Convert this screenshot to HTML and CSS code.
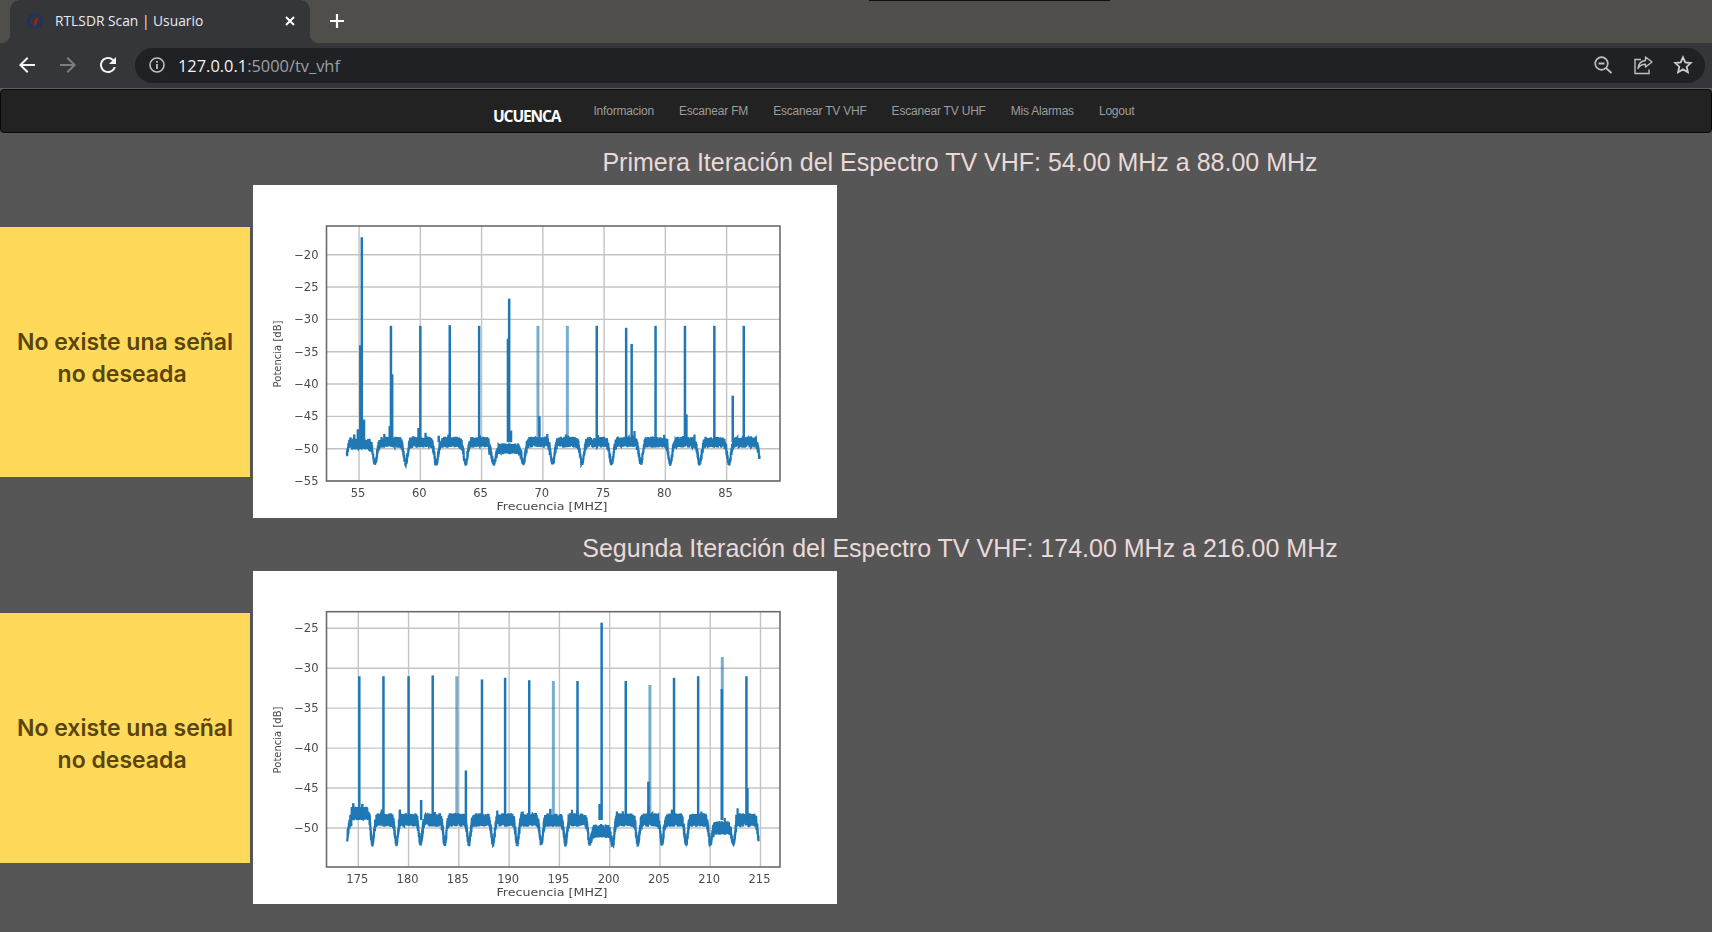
FILE: index.html
```html
<!DOCTYPE html>
<html lang="es">
<head>
<meta charset="utf-8">
<title>RTLSDR Scan | Usuario</title>
<link rel="stylesheet" href="styles.css">
</head>
<body>
<header class="browser">
  <div class="tabstrip">
    <span class="capture-line"></span>
    <div class="tab">
      <svg class="favicon" viewBox="0 0 16 16"><circle cx="8" cy="8" r="6.500" fill="none" stroke="#1d3358" stroke-width="2.500"/><path d="M12 2 7 9l1 6z" fill="#a3202c"/></svg>
      <span class="tab-title">RTLSDR Scan | Usuario</span>
      <svg class="tab-close" viewBox="0 0 12 12"><path d="M2 2l8 8M10 2l-8 8" stroke="#fff" stroke-width="2" fill="none"/></svg>
    </div>
    <svg class="new-tab" viewBox="0 0 16 16"><path d="M8 1v14M1 8h14" stroke="#fff" stroke-width="2.2" fill="none"/></svg>
  </div>
  <div class="toolbar">
    <svg class="tool" viewBox="0 0 24 24"><path fill="#f1f3f4" d="M20 11H7.83l5.59-5.59L12 4l-8 8 8 8 1.41-1.41L7.83 13H20v-2z"/></svg>
    <svg class="tool" viewBox="0 0 24 24"><path fill="#7d7e81" d="M4 11h12.17l-5.59-5.59L12 4l8 8-8 8-1.41-1.41L16.17 13H4v-2z"/></svg>
    <svg class="tool tool-reload" viewBox="0 0 24 24"><path fill="#f1f3f4" d="M17.65 6.35A7.958 7.958 0 0 0 12 4c-4.42 0-7.99 3.58-7.99 8s3.57 8 7.99 8c3.73 0 6.84-2.55 7.73-6h-2.08A5.99 5.99 0 0 1 12 18c-3.31 0-6-2.69-6-6s2.69-6 6-6c1.66 0 3.14.69 4.22 1.78L13 11h7V4l-2.35 2.35z"/></svg>
    <div class="omnibox">
      <svg class="info" viewBox="0 0 16 16"><circle cx="8" cy="8" r="7" fill="none" stroke="#bdc1c6" stroke-width="1.6"/><path d="M8 7v5M8 4v1.8" stroke="#bdc1c6" stroke-width="1.8" fill="none"/></svg>
      <span class="url"><span class="url-host">127.0.0.1</span>:5000/tv_vhf</span>
      <div class="omni-actions">
        <svg class="omni-icon" viewBox="0 0 20 20"><circle cx="8.5" cy="8.5" r="6.3" fill="none" stroke="#bdc1c6" stroke-width="1.7"/><path d="M5.5 8.5h6M13 13l5.5 5" stroke="#bdc1c6" stroke-width="1.8" fill="none"/></svg>
        <svg class="omni-icon" viewBox="0 0 20 20"><path d="M8 4.500H2v14h14v-4" fill="none" stroke="#bdc1c6" stroke-width="1.4"/><path d="M12.500 2l6.500 5-6.500 5V9.300C9 9.300 6.500 10.500 5 13.500c.4-4.500 3.300-7.500 7.500-8z" fill="none" stroke="#bdc1c6" stroke-width="1.4" stroke-linejoin="round"/></svg>
        <svg class="omni-icon" viewBox="0 0 20 20"><path d="M10 2.300l2.300 5.100 5.500.6-4.100 3.700 1.200 5.500L10 14.400l-4.900 2.800 1.200-5.500L2.200 8l5.500-.6z" fill="none" stroke="#c8cbd0" stroke-width="1.8" stroke-linejoin="miter"/></svg>
      </div>
    </div>
  </div>
</header>

<nav class="navbar">
  <a class="brand" href="#">UCUENCA</a>
  <ul class="menu">
    <li><a href="#">Informacion</a></li>
    <li><a href="#">Escanear FM</a></li>
    <li><a href="#">Escanear TV VHF</a></li>
    <li><a href="#">Escanear TV UHF</a></li>
    <li><a href="#">Mis Alarmas</a></li>
    <li><a href="#">Logout</a></li>
  </ul>
</nav>

<main class="content">
  <section class="scan">
    <h2 class="scan-title">Primera Iteración del Espectro TV VHF: 54.00 MHz a 88.00 MHz</h2>
    <div class="scan-row">
      <div class="alert"><p>No existe una señal<br>no deseada&nbsp;</p></div>
      <figure class="plot"><svg class="chart" id="chart-first" viewBox="0 0 584 333"></svg></figure>
    </div>
  </section>
  <section class="scan">
    <h2 class="scan-title">Segunda Iteración del Espectro TV VHF: 174.00 MHz a 216.00 MHz</h2>
    <div class="scan-row">
      <div class="alert"><p>No existe una señal<br>no deseada&nbsp;</p></div>
      <figure class="plot"><svg class="chart" id="chart-second" viewBox="0 0 584 333"></svg></figure>
    </div>
  </section>
</main>
<script src="chart.js"></script>
</body>
</html>
```

FILE: styles.css
```css
* { box-sizing: border-box; }
html, body { margin: 0; height: 100%; }
body {
  background: #565656;
  overflow: hidden;
  font-family: "Liberation Sans", Arial, sans-serif;
}

/* browser chrome */
.tabstrip {
  position: relative;
  display: flex;
  align-items: flex-start;
  height: 43px;
  padding-left: 10px;
  background: #4f4e4b;
}
.capture-line {
  position: absolute;
  top: 0;
  left: 869px;
  width: 241px;
  height: 1px;
  background: #111;
}
.tab {
  position: relative;
  display: flex;
  align-items: center;
  width: 300px;
  height: 43px;
  padding: 0 14px 2px 17px;
  background: #35363a;
  border-radius: 10px 10px 0 0;
}
.tab::before, .tab::after {
  content: "";
  position: absolute;
  bottom: 0;
  width: 9px;
  height: 9px;
}
.tab::before {
  left: -9px;
  background: radial-gradient(circle at 0 0, transparent 9px, #35363a 9.5px);
}
.tab::after {
  right: -9px;
  background: radial-gradient(circle at 100% 0, transparent 9px, #35363a 9.5px);
}
.favicon { width: 16px; height: 16px; flex: none; }
.tab-title {
  flex: 1;
  margin-left: 12px;
  color: #e8eaed;
  font: 13.8px "Open Sans", sans-serif;
  white-space: nowrap;
}
.tab-close { width: 12px; height: 12px; flex: none; }
.new-tab { width: 16px; height: 16px; flex: none; margin: 13px 0 0 19px; }

.toolbar {
  display: flex;
  align-items: center;
  gap: 17px;
  height: 46px;
  padding: 0 7px 1px 15px;
  background: #35363a;
  border-bottom: 1px solid #5f6064;
}
.tool { width: 24px; height: 24px; flex: none; }
.tool-reload { margin-left: -1px; }
.omnibox {
  flex: 1;
  display: flex;
  align-items: center;
  height: 35px;
  margin-left: -2px;
  padding: 0 12px 0 14px;
  background: #202124;
  border-radius: 18px;
}
.info { width: 16px; height: 16px; flex: none; }
.url {
  margin-left: 13px;
  color: #9aa0a6;
  font: 16.4px "Open Sans", sans-serif;
}
.url-host { color: #f1f3f4; }
.omni-actions { display: flex; gap: 20px; margin-left: auto; }
.omni-icon { width: 20px; height: 20px; flex: none; }

/* site navbar */
.navbar {
  display: flex;
  align-items: flex-start;
  height: 44px;
  padding-left: 492px;
  background: #222;
  border: 1px solid #080808;
  border-radius: 4px;
}
.brand {
  margin-top: 16px;
  color: #fff;
  font: 700 15.5px/20px "Open Sans", sans-serif;
  letter-spacing: -1.1px;
  text-decoration: none;
}
.menu {
  display: flex;
  gap: 25px;
  margin: 12px 0 0 33px;
  padding: 0;
  list-style: none;
}
.menu a {
  display: block;
  color: #9d9d9d;
  font-size: 12px;
  letter-spacing: -0.2px;
  line-height: 18px;
  text-decoration: none;
}

/* content */
.scan-title {
  height: 52px;
  margin: 0;
  padding: 12px 0 0 208px;
  color: #ead9d9;
  font-size: 25px;
  font-weight: 400;
  line-height: 34px;
  text-align: center;
}
.scan:last-child .scan-title { height: 53px; padding-top: 13px; }
.scan-row {
  display: flex;
  align-items: center;
  gap: 3px;
}
.alert {
  display: flex;
  align-items: center;
  justify-content: center;
  width: 250px;
  height: 250px;
  padding-top: 12px;
  background: #ffd95a;
}
.alert p {
  margin: 0;
  color: #5a4509;
  font: 600 23px/32px Inter, sans-serif;
  text-align: center;
  white-space: nowrap;
}
.plot { width: 584px; height: 333px; margin: 0; background: #fff; }
.chart { display: block; width: 584px; height: 333px; filter: blur(0.7px); }
.grid { stroke: #c4c4c4; stroke-width: 1.4; }
.frame { fill: none; stroke: #6c6c6c; stroke-width: 1.6; }
.trace { fill: none; stroke: #1f77b4; stroke-width: 2.2; }
.peak { stroke: #1f77b4; stroke-width: 2.5; }
.peak-light { stroke: #1f77b4; stroke-width: 3; opacity: 0.6; }
.tick { fill: #4a4a4a; font: 11.5px "DejaVu Sans", sans-serif; }
.axis-title { fill: #4a4a4a; font: 10px "DejaVu Sans", sans-serif; }
```

FILE: chart.js
```js
(function () {
  var NS = 'http://www.w3.org/2000/svg';

  function rng(seed) {
    return function () {
      seed = (seed + 0x6d2b79f5) | 0;
      var t = Math.imul(seed ^ (seed >>> 15), 1 | seed);
      t = (t + Math.imul(t ^ (t >>> 7), 61 | t)) ^ t;
      return ((t ^ (t >>> 14)) >>> 0) / 4294967296;
    };
  }

  function el(parent, name, attrs, text) {
    var node = document.createElementNS(NS, name);
    Object.keys(attrs).forEach(function (k) { node.setAttribute(k, attrs[k]); });
    if (text) node.textContent = text;
    parent.appendChild(node);
    return node;
  }

  function range(a, b, step) {
    var out = [];
    for (var v = a; v <= b + 1e-6; v += step) out.push(v);
    return out;
  }

  function draw(cfg) {
    var svg = document.getElementById(cfg.id);
    var rand = rng(cfg.seed);
    var L = 73.5, R = 527, T = cfg.top, B = 296;
    function X(f) { return cfg.x0 + (f - cfg.f0) * cfg.xs; }
    function Y(db) { return cfg.y0 + (cfg.db0 - db) * cfg.ys; }

    cfg.xticks.forEach(function (f) {
      el(svg, 'line', { 'class': 'grid', x1: X(f), x2: X(f), y1: T, y2: B });
      el(svg, 'text', { 'class': 'tick', x: X(f) - 1, y: B + 16, 'text-anchor': 'middle' }, String(f));
    });
    cfg.yticks.forEach(function (db) {
      el(svg, 'line', { 'class': 'grid', x1: L, x2: R, y1: Y(db), y2: Y(db) });
      el(svg, 'text', { 'class': 'tick', x: L - 8, y: Y(db) + 4, 'text-anchor': 'end' }, '\u2212' + Math.abs(db));
    });

    function level(f) {
      var v = cfg.plateau;
      cfg.zones.forEach(function (z) { if (f >= z[0] && f <= z[1]) v = z[2]; });
      return v;
    }
    function dipAmount(f) {
      var d = 0;
      cfg.dips.forEach(function (c) {
        var u = (f - c) / 0.22;
        d = Math.max(d, Math.exp(-u * u));
      });
      return d;
    }

    var pts = [];
    for (var f = cfg.start; f <= cfg.end; f += 0.01) {
      var dip = dipAmount(f);
      var base = level(f) * (1 - dip) + cfg.dipFloor * dip;
      var amp = cfg.noise * (1 - 0.6 * dip);
      var v = base + (rand() * 2 - 1) * amp;
      if (rand() < 0.02) v += rand() * 1;
      pts.push(X(f).toFixed(1) + ',' + Y(v).toFixed(1));
    }
    el(svg, 'path', { 'class': 'trace', d: 'M' + pts.join('L') });

    cfg.peaks.forEach(function (p) {
      el(svg, 'line', {
        'class': p[2] ? 'peak-light' : 'peak',
        x1: X(p[0]), x2: X(p[0]), y1: Y(-49), y2: Y(p[1])
      });
    });
    cfg.spurs.forEach(function (p) {
      el(svg, 'line', { 'class': 'peak', x1: X(p[0]), x2: X(p[0]), y1: Y(-49), y2: Y(p[1]) });
    });

    el(svg, 'rect', { 'class': 'frame', x: L, y: T, width: R - L, height: B - T });
    el(svg, 'text', {
      'class': 'axis-title', x: 299, y: 325, 'text-anchor': 'middle',
      textLength: 111, lengthAdjust: 'spacingAndGlyphs'
    }, 'Frecuencia [MHZ]');
    el(svg, 'text', {
      'class': 'axis-title', 'text-anchor': 'middle',
      transform: 'translate(28 169) rotate(-90)'
    }, 'Potencia [dB]');
  }

  draw({
    id: 'chart-first', seed: 11, top: 41,
    f0: 55, x0: 106.1, xs: 12.25,
    db0: -20, y0: 69.7, ys: 6.466,
    start: 54, end: 87.7,
    plateau: -49, noise: 0.85, dipFloor: -52.3,
    zones: [[54.4, 56, -49.3], [65.6, 68.2, -50]],
    dips: [53.85, 56.3, 58.8, 61.3, 63.7, 66, 68.4, 70.8, 73.2, 75.6, 78, 80.4, 82.8, 85.2, 87.8],
    xticks: [55, 60, 65, 70, 75, 80, 85],
    yticks: [-20, -25, -30, -35, -40, -45, -50, -55],
    peaks: [[55.22, -17.3], [57.6, -31], [60, -31], [62.4, -30.9], [64.8, -31], [67.25, -26.8],
      [69.6, -31, 1], [72, -31, 1], [74.4, -31], [76.8, -31.3], [77.25, -33.8], [79.2, -31],
      [81.6, -31], [84, -31], [85.5, -41.8], [86.4, -31]],
    spurs: [[55.1, -34], [55.4, -45.5], [57.7, -38.5], [57.5, -46.5], [59.85, -46.8], [67.15, -33],
      [69.72, -45], [81.72, -44.7], [54.9, -47], [54.6, -47.8], [61.5, -48], [67.4, -47.2], [71.9, -47.8], [74.5, -47.9]]
  });

  draw({
    id: 'chart-second', seed: 29, top: 40.7,
    f0: 175, x0: 105.3, xs: 10.055,
    db0: -25, y0: 57.3, ys: 7.987,
    start: 173.9, end: 214.8,
    plateau: -49, noise: 0.85, dipFloor: -52,
    zones: [[174.3, 176.2, -48.2], [198, 200.4, -50.4], [209.9, 212.3, -50]],
    dips: [173.8, 176.4, 178.8, 181.2, 183.6, 186, 188.4, 190.8, 193.2, 195.6, 198, 200.3, 202.8, 205.2, 207.6, 210, 212.3, 214.9],
    xticks: range(175, 215, 5),
    yticks: [-25, -30, -35, -40, -45, -50],
    peaks: [[175.1, -31], [177.5, -31], [180, -31], [182.4, -30.9], [184.8, -31, 1], [185.7, -42.8],
      [187.3, -31.4], [189.6, -31.2], [192, -31.5], [194.4, -31.6, 1], [196.8, -31.6], [199.2, -24.3],
      [201.6, -31.6], [204, -32.1, 1], [206.4, -31.2], [208.8, -31], [211.2, -28.6, 1], [213.6, -31]],
    spurs: [[181.25, -46.5], [203.85, -44.2], [211.15, -32.6], [199, -47], [174.5, -46.9], [175.4, -47], [182.6, -48], [194.1, -47.6], [206.2, -47.7], [213.7, -45]]
  });
})();
```
